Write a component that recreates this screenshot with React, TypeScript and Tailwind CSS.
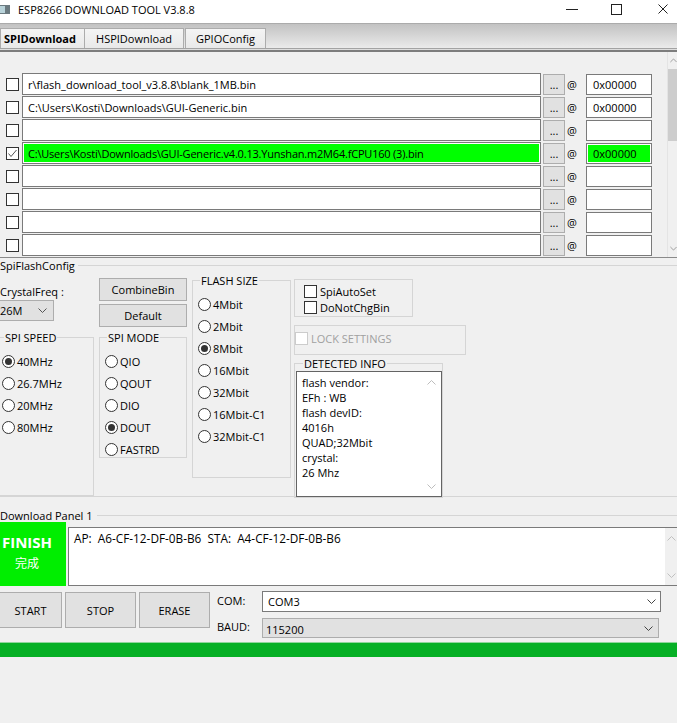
import React from "react";

function Chevron({ color = "#333333", up = false }: { color?: string; up?: boolean }) {
  return (
    <svg width="9" height="5" viewBox="0 0 9 5" className="block">
      <path
        d={up ? "M0.5 4.5 L4.5 0.5 L8.5 4.5" : "M0.5 0.5 L4.5 4.5 L8.5 0.5"}
        fill="none"
        stroke={color}
        strokeWidth="1"
      />
    </svg>
  );
}

function Check({ checked = false, disabled = false }: { checked?: boolean; disabled?: boolean }) {
  return (
    <span
      className={
        disabled
          ? "w-[13px] h-[13px] shrink-0 flex items-center justify-center bg-white border border-[#cccccc]"
          : "w-[13px] h-[13px] shrink-0 flex items-center justify-center bg-white border border-[#333333]"
      }
    >
      {checked && (
        <svg width="11" height="11" viewBox="0 0 11 11">
          <path d="M1.5 5.5 L4 8.5 L9.5 2" fill="none" stroke="#555555" strokeWidth="1" />
        </svg>
      )}
    </span>
  );
}

function Radio({ checked = false }: { checked?: boolean }) {
  return (
    <span className="w-[13px] h-[13px] shrink-0 rounded-full border border-[#333333] bg-white flex items-center justify-center">
      {checked && <span className="w-[7px] h-[7px] rounded-full bg-[#333333]" />}
    </span>
  );
}

function RadioRow({ label, checked = false }: { label: string; checked?: boolean }) {
  return (
    <div className="h-[22px] flex items-center gap-[2px] whitespace-nowrap">
      <Radio checked={checked} />
      <span>{label}</span>
    </div>
  );
}

function Group({
  label,
  labelPos,
  className,
  children,
}: {
  label?: string;
  labelPos?: string;
  className: string;
  children?: React.ReactNode;
}) {
  return (
    <div className={"relative border border-[#d5d5d5] " + className}>
      {label && (
        <span className={"absolute -top-[8px] px-[1px] bg-[#f0f0f0] leading-[15px] whitespace-nowrap " + (labelPos ?? "")}>
          {label}
        </span>
      )}
      {children}
    </div>
  );
}

type Row = { path?: string; addr?: string; checked?: boolean; green?: boolean };

const rows: Row[] = [
  { path: "r\\flash_download_tool_v3.8.8\\blank_1MB.bin", addr: "0x00000" },
  { path: "C:\\Users\\Kosti\\Downloads\\GUI-Generic.bin", addr: "0x00000" },
  { path: "", addr: "" },
  {
    path: "C:\\Users\\Kosti\\Downloads\\GUI-Generic.v4.0.13.Yunshan.m2M64.fCPU160 (3).bin",
    addr: "0x00000",
    checked: true,
    green: true,
  },
  {},
  {},
  {},
  {},
];

function FileRow({ row }: { row: Row }) {
  return (
    <div className="h-[22px] flex items-start">
      <div className="ml-[6px] h-[22px] flex items-center">
        <Check checked={row.checked} />
      </div>
      {row.green ? (
        <div className="ml-[3px] w-[519px] h-[22px] border border-[#7a7a7a] bg-white p-px">
          <div className="h-full bg-[#00ff00] flex items-center pl-[4px] whitespace-nowrap overflow-hidden tracking-[-0.2px]">
            {row.path}
          </div>
        </div>
      ) : (
        <div className="ml-[3px] w-[519px] h-[22px] border border-[#7a7a7a] bg-white flex items-center pl-[5px] whitespace-nowrap overflow-hidden">
          {row.path}
        </div>
      )}
      <div className="ml-[2px] mt-px w-[22px] h-[21px] bg-[#e1e1e1] border border-[#adadad] flex items-center justify-center text-[11px] leading-[11px]">
        ...
      </div>
      <div className="w-[21px] h-[22px] pl-[2px] flex items-center text-[11px]">@</div>
      {row.green ? (
        <div className="mt-px w-[66px] h-[21px] border border-[#7a7a7a] bg-white p-px">
          <div className="h-full bg-[#00ff00] flex items-center pl-[5px]">{row.addr}</div>
        </div>
      ) : (
        <div className="mt-px w-[66px] h-[21px] border border-[#7a7a7a] bg-white flex items-center pl-[6px]">{row.addr}</div>
      )}
    </div>
  );
}

export default function App() {
  return (
    <div className="w-[677px] h-[723px] overflow-hidden bg-[#f0f0f0] text-black text-[11px] leading-[15px] font-['Open_Sans','Noto_Sans_CJK_SC',sans-serif] flex flex-col">
      {/* Title bar */}
      <div className="h-[23px] shrink-0 bg-white flex items-start">
        <svg width="11" height="9" viewBox="0 0 11 9" className="mt-[5px]">
          <rect x="0" y="0" width="10" height="9" fill="#6b7a80" />
          <rect x="0" y="1" width="5" height="7" fill="#b9d3da" />
        </svg>
        <span className="ml-[7px] mt-[2px]">ESP8266 DOWNLOAD TOOL V3.8.8</span>
        <div className="ml-auto flex items-start">
          <svg width="12" height="1" viewBox="0 0 12 1" className="mt-[9px]">
            <rect x="0" y="0" width="12" height="1" fill="#222222" />
          </svg>
          <svg width="11" height="11" viewBox="0 0 11 11" className="ml-[33px] mt-[4px]">
            <rect x="0.5" y="0.5" width="10" height="10" fill="none" stroke="#222222" strokeWidth="1" />
          </svg>
          <svg width="10" height="10" viewBox="0 0 10 10" className="ml-[36px] mt-[4px] mr-[9px]">
            <path d="M0.5 0.5 L9.5 9.5 M9.5 0.5 L0.5 9.5" fill="none" stroke="#222222" strokeWidth="1" />
          </svg>
        </div>
      </div>

      {/* Tab strip */}
      <div className="h-[29px] shrink-0 flex flex-col">
        <div className="h-[25px] border-t border-[#ababab] bg-linear-to-b from-[#c2c2c2] to-[#ebebeb] flex items-end">
          <div className="w-[85px] h-[20px] border border-b-0 border-[#acacac] bg-linear-to-b from-[#f4f4f4] to-[#e9e9e9] font-bold pl-[3px] flex items-center whitespace-nowrap">
            SPIDownload
          </div>
          <div className="w-[99px] h-[20px] border border-b-0 border-l-0 border-[#acacac] bg-linear-to-b from-[#f4f4f4] to-[#e9e9e9] flex items-center justify-center whitespace-nowrap">
            HSPIDownload
          </div>
          <div className="ml-[1px] w-[81px] h-[20px] border border-b-0 border-[#acacac] bg-linear-to-b from-[#f4f4f4] to-[#e9e9e9] flex items-center justify-center whitespace-nowrap">
            GPIOConfig
          </div>
        </div>
        <div className="h-px bg-[#a3a3a3]" />
        <div className="h-px bg-[#dedede]" />
        <div className="h-[2px] bg-[#7d7d7d]" />
      </div>

      {/* File list */}
      <div className="h-[206px] shrink-0 border-b border-[#8a8a8a] flex">
        <div className="flex-1 pt-[21px] flex flex-col gap-px">
          {rows.map((r, i) => (
            <FileRow key={i} row={r} />
          ))}
        </div>
        <div className="w-[10px] h-full border-l border-[#e4e4e4] bg-[#f0f0f0] flex flex-col">
          <div className="h-[17px] flex items-center pl-[2px]">
            <Chevron up color="#8a8a8a" />
          </div>
          <div className="h-[72px] bg-[#cdcdcd]" />
          <div className="flex-1" />
          <div className="h-[17px] flex items-center pl-[2px]">
            <Chevron color="#8a8a8a" />
          </div>
        </div>
      </div>

      {/* SpiFlashConfig */}
      <div className="h-[239px] shrink-0 pt-[7px]">
        <div className="relative h-[232px] border-t border-b border-[#d5d5d5]">
          <span className="absolute -top-[8px] left-0 pr-[3px] bg-[#f0f0f0] leading-[15px]">SpiFlashConfig</span>
          <div className="flex items-start">
            {/* column 1 */}
            <div className="w-[99px] shrink-0 flex flex-col">
              <div className="mt-[18px] h-[15px] whitespace-nowrap">CrystalFreq :</div>
              <div className="mt-[1px] w-[54px] h-[21px] border border-l-0 border-[#adadad] bg-[#e1e1e1] flex items-center">
                <span>26M</span>
                <span className="ml-auto mr-[6px]">
                  <Chevron color="#555555" />
                </span>
              </div>
              <Group label="SPI SPEED" labelPos="left-[5px]" className="mt-[16px] -ml-[2px] w-[96px] h-[159px] pt-[12px] pl-[3px]">
                <RadioRow label="40MHz" checked />
                <RadioRow label="26.7MHz" />
                <RadioRow label="20MHz" />
                <RadioRow label="80MHz" />
              </Group>
            </div>
            {/* column 2 */}
            <div className="w-[93px] shrink-0 flex flex-col">
              <div className="mt-[12px] w-[88px] h-[23px] bg-[#e1e1e1] border border-[#adadad] flex items-center justify-center">
                CombineBin
              </div>
              <div className="mt-[3px] w-[88px] h-[23px] bg-[#e1e1e1] border border-[#adadad] flex items-center justify-center">
                Default
              </div>
              <Group label="SPI MODE" labelPos="left-[7px]" className="mt-[10px] w-[88px] h-[121px] pt-[12px] pl-[5px]">
                <RadioRow label="QIO" />
                <RadioRow label="QOUT" />
                <RadioRow label="DIO" />
                <RadioRow label="DOUT" checked />
                <RadioRow label="FASTRD" />
              </Group>
            </div>
            {/* column 3 */}
            <div className="w-[102px] shrink-0 flex flex-col">
              <Group label="FLASH SIZE" labelPos="left-[7px]" className="mt-[14px] w-[99px] h-[198px] pt-[12px] pl-[5px]">
                <RadioRow label="4Mbit" />
                <RadioRow label="2Mbit" />
                <RadioRow label="8Mbit" checked />
                <RadioRow label="16Mbit" />
                <RadioRow label="32Mbit" />
                <RadioRow label="16Mbit-C1" />
                <RadioRow label="32Mbit-C1" />
              </Group>
            </div>
            {/* column 4 */}
            <div className="w-[172px] shrink-0 flex flex-col">
              <Group className="mt-[13px] w-[119px] h-[38px] pt-[3px] pl-[9px]">
                <div className="h-[16px] flex items-center gap-[3px]">
                  <Check />
                  <span>SpiAutoSet</span>
                </div>
                <div className="h-[16px] flex items-center gap-[3px]">
                  <Check />
                  <span>DoNotChgBin</span>
                </div>
              </Group>
              <Group className="mt-[8px] w-[172px] h-[30px]">
                <div className="mt-[5px] h-[15px] flex items-center gap-[3px]">
                  <Check disabled />
                  <span className="text-[#a0a0a0]">LOCK SETTINGS</span>
                </div>
              </Group>
              <Group label="DETECTED INFO" labelPos="left-[8px]" className="mt-[8px] w-[149px] h-[135px]">
                <div className="mt-[7px] ml-[1px] w-[146px] h-[126px] border border-[#646464] bg-white flex">
                  <div className="flex-1 pl-[5px] pt-[3px] flex flex-col whitespace-nowrap">
                    <span>flash vendor:</span>
                    <span>EFh : WB</span>
                    <span>flash devID:</span>
                    <span>4016h</span>
                    <span>QUAD;32Mbit</span>
                    <span>crystal:</span>
                    <span>26 Mhz</span>
                  </div>
                  <div className="w-[14px] flex flex-col">
                    <div className="h-[20px] flex items-center">
                      <Chevron up color="#bdbdbd" />
                    </div>
                    <div className="flex-1" />
                    <div className="h-[20px] flex items-center">
                      <Chevron color="#bdbdbd" />
                    </div>
                  </div>
                </div>
              </Group>
            </div>
          </div>
        </div>
      </div>

      {/* Download panel */}
      <div className="mt-[11px] h-[14px] shrink-0 flex items-center">
        <span className="whitespace-nowrap">Download Panel 1</span>
        <div className="ml-[4px] flex-1 h-px bg-[#d5d5d5]" />
      </div>
      <div className="h-[64px] shrink-0 flex items-start">
        <div className="w-[66px] h-[64px] bg-[#00ee00] flex flex-col text-white">
          <div className="w-[54px] flex flex-col items-center">
            <span className="mt-[10px] text-[15px] leading-[20px] font-bold">FINISH</span>
            <span className="mt-[4px] text-[12px] leading-[15px]">完成</span>
          </div>
        </div>
        <div className="ml-[2px] mt-[5px] flex-1 h-[59px] border border-r-0 border-[#7a7a7a] bg-white flex">
          <div className="flex-1 pl-[5px] pt-[3px] whitespace-pre text-[11.8px]">AP:  A6-CF-12-DF-0B-B6  STA:  A4-CF-12-DF-0B-B6</div>
          <div className="w-[12px] bg-[#f0f0f0] flex flex-col">
            <div className="h-[20px] flex items-center pl-[2px]">
              <Chevron up color="#c0c0c0" />
            </div>
            <div className="flex-1" />
            <div className="h-[20px] flex items-center pl-[2px]">
              <Chevron color="#c0c0c0" />
            </div>
          </div>
        </div>
      </div>

      {/* Buttons + COM/BAUD */}
      <div className="h-[56px] shrink-0 flex items-start">
        <div className="mt-[6px] w-[62px] h-[36px] bg-[#e1e1e1] border border-l-0 border-[#adadad] flex items-center justify-center">
          START
        </div>
        <div className="ml-[3px] mt-[6px] w-[71px] h-[36px] bg-[#e1e1e1] border border-[#adadad] flex items-center justify-center">
          STOP
        </div>
        <div className="ml-[3px] mt-[6px] w-[71px] h-[36px] bg-[#e1e1e1] border border-[#adadad] flex items-center justify-center">
          ERASE
        </div>
        <div className="ml-[7px] flex flex-col">
          <div className="mt-[5px] h-[21px] flex items-center">
            <span className="w-[45px] -mt-[3px]">COM:</span>
            <div className="w-[399px] h-[21px] border border-[#7a7a7a] bg-white flex items-center pl-[5px]">
              <span>COM3</span>
              <span className="ml-auto mr-[4px]">
                <Chevron color="#444444" />
              </span>
            </div>
          </div>
          <div className="mt-[6px] h-[20px] flex items-center">
            <span className="w-[45px] -mt-[3px]">BAUD:</span>
            <div className="w-[397px] h-[20px] border border-[#adadad] bg-[#e1e1e1] flex items-center pl-[3px]">
              <span className="mt-[2px]">115200</span>
              <span className="ml-auto mr-[5px]">
                <Chevron color="#444444" />
              </span>
            </div>
          </div>
        </div>
      </div>

      {/* Progress bar */}
      <div className="h-[15px] shrink-0 bg-[#06b025] border-t border-[#8fd69b]" />
    </div>
  );
}
